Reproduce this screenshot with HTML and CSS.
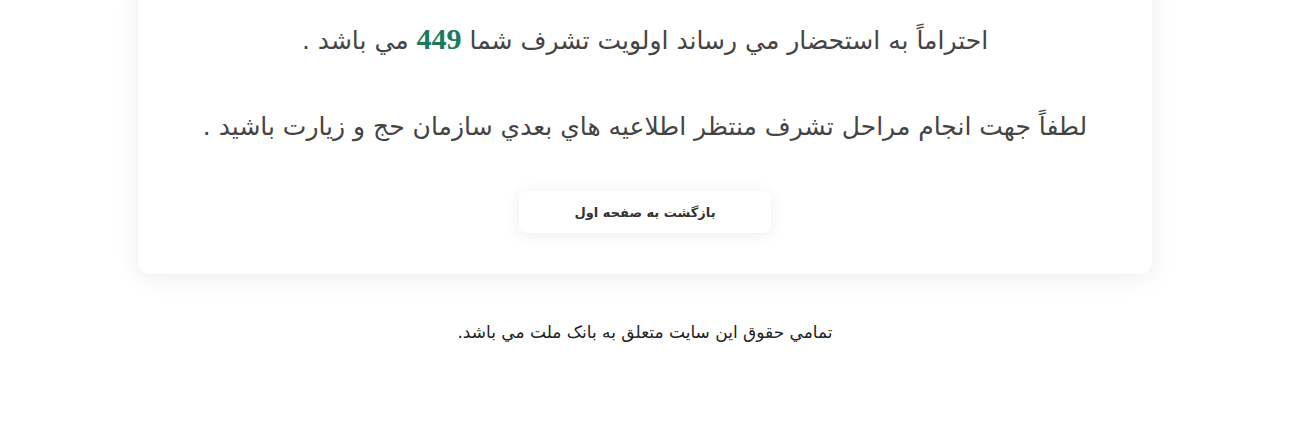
FILE: index.html
```html
<!DOCTYPE html>
<html lang="fa" dir="rtl">
<head>
<meta charset="utf-8">
<title>اولویت تشرف</title>
<link rel="stylesheet" href="styles.css">
</head>
<body>
<main class="page">
  <section class="card">
    <p class="msg">احتراماً به استحضار مي رساند اولويت تشرف شما <b class="num">449</b> مي باشد .</p>
    <p class="msg">لطفاً جهت انجام مراحل تشرف منتظر اطلاعيه هاي بعدي سازمان حج و زيارت باشيد .</p>
    <div class="actions"><a class="btn" href="#">بازگشت به صفحه اول</a></div>
  </section>
  <footer class="foot">تمامي حقوق اين سايت متعلق به بانک ملت مي باشد.</footer>
</main>
</body>
</html>
```
FILE: styles.css
```css
html, body { margin: 0; padding: 0; background: #fff; }
body { font-family: "DejaVu Sans", sans-serif; color: #444; }
.page { display: flex; flex-direction: column; align-items: center; }
.card {
  width: 1014px;
  margin-top: -19px;
  background: #fff;
  border-radius: 12px;
  box-shadow: 0 4px 24px rgba(0,0,0,0.08);
  padding: 40px 0 41px;
  display: flex; flex-direction: column; align-items: center;
}
.msg { margin: 0 0 50px; font-size: 25px; line-height: 36px; color: #444; text-align: center; }
.msg:nth-of-type(2) { margin-bottom: 46px; }
.num { font-family: "Liberation Serif", serif; color: #1b7a5c; font-size: 30px; }
.btn {
  display: flex; align-items: center; justify-content: center;
  width: 252px; height: 42px;
  background: #fff; border-radius: 8px;
  box-shadow: 0 2px 16px rgba(0,0,0,0.08);
  color: #333; font-weight: bold; font-size: 13px; text-decoration: none;
}
.foot { margin-top: 48px; font-size: 17px; color: #222; }
```
